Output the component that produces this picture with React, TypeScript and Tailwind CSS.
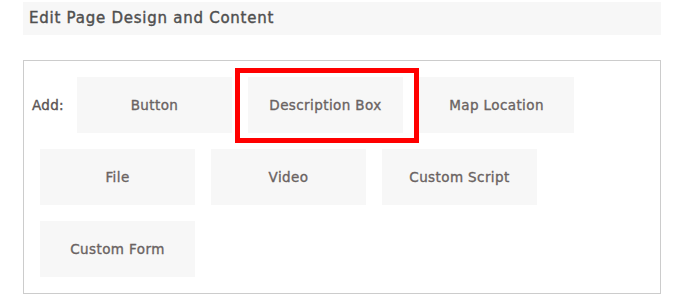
import React from "react";

function Btn({ label, highlight }: { label: string; highlight?: boolean }) {
  return (
    <div className="relative">
      <div className="w-[155px] h-[56px] bg-[#f7f7f7] flex items-center justify-center text-[13.5px] tracking-[0.4px] text-[#6a6362] [-webkit-text-stroke:0.35px_#6a6362]">
        {label}
      </div>
      {highlight && (
        <div className="absolute left-[-13px] top-[-9px] right-[-16px] bottom-[-10px] border-[5px] border-[#ff0000] pointer-events-none" />
      )}
    </div>
  );
}

export default function App() {
  return (
    <div className="w-[695px] h-[303px] bg-white pt-[2px]" style={{ fontFamily: '"DejaVu Sans", sans-serif' }}>
      <div className="ml-[23px] w-[638px] h-[33px] bg-[#f7f7f7] flex items-center pl-[6px] text-[15px] tracking-[0.75px] text-[#4f4f4f] [-webkit-text-stroke:0.4px_#4f4f4f]">
        Edit Page Design and Content
      </div>
      <div className="ml-[23px] mt-[25px] w-[638px] h-[234px] border border-[#cccccc] pt-[16px] pl-[8px] flex flex-col gap-4">
        <div className="flex items-center gap-4">
          <span className="w-[29px] text-[13.5px] tracking-[0.3px] text-[#5a5453] [-webkit-text-stroke:0.35px_#5a5453] whitespace-nowrap">Add:</span>
          <Btn label="Button" />
          <Btn label="Description Box" highlight />
          <Btn label="Map Location" />
        </div>
        <div className="flex gap-4 pl-[8px]">
          <Btn label="File" />
          <Btn label="Video" />
          <Btn label="Custom Script" />
        </div>
        <div className="flex gap-4 pl-[8px]">
          <Btn label="Custom Form" />
        </div>
      </div>
    </div>
  );
}
